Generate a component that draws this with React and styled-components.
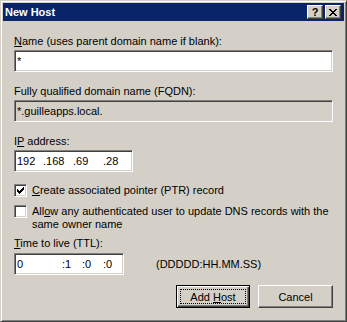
import React from 'react';
import styled, { createGlobalStyle } from 'styled-components';

const GlobalStyle = createGlobalStyle`
  html, body {
    margin: 0;
    padding: 0;
    background: #d4d0c8;
  }
  body {
    font-family: "Liberation Sans", Arial, sans-serif;
    font-size: 11px;
    color: #000;
  }
`;

const Window = styled.div`
  box-sizing: border-box;
  width: 347px;
  height: 322px;
  display: flex;
  flex-direction: column;
  padding: 2px;
  background: #d4d0c8;
  border: 1px solid;
  border-color: #d4d0c8 #404040 #404040 #d4d0c8;
  box-shadow: inset 1px 1px #fff, inset -1px -1px #808080;
`;

const TitleBar = styled.div`
  height: 18px;
  display: flex;
  align-items: center;
  padding: 0 3px 0 2px;
  background: #0a246a;
  color: #fff;
  font-weight: bold;
  font-size: 11px;
`;

const Title = styled.span`
  flex: 1;
`;

const CaptionButtons = styled.div`
  display: flex;
  gap: 2px;
`;

const CaptionButton = styled.div`
  box-sizing: border-box;
  width: 16px;
  height: 14px;
  display: flex;
  align-items: center;
  justify-content: center;
  background: #d4d0c8;
  color: #000;
  font-weight: bold;
  font-size: 11px;
  border: 1px solid;
  border-color: #fff #404040 #404040 #fff;
  box-shadow: inset -1px -1px #808080;
`;

const Body = styled.div`
  display: flex;
  flex-direction: column;
  padding: 14px 11px 0 11px;
`;

const Label = styled.div`
  line-height: 13px;
  height: 13px;
  margin-top: ${p => p.mt || 0}px;
  margin-bottom: ${p => (p.mb === undefined ? 2 : p.mb)}px;
  white-space: nowrap;
`;

const Key = styled.span`
  text-decoration: underline;
  text-underline-offset: 1px;
`;

const Field = styled.div`
  box-sizing: border-box;
  height: 22px;
  width: ${p => (p.w ? `${p.w}px` : '100%')};
  display: flex;
  align-items: center;
  padding: 0 2px;
  background: ${p => (p.readOnly ? '#d4d0c8' : '#fff')};
  border: 1px solid;
  border-color: #808080 #fff #fff #808080;
  box-shadow: inset 1px 1px #404040, inset -1px -1px #d4d0c8;
  white-space: nowrap;
`;

const Segment = styled.span`
  display: inline-block;
  width: ${p => p.w}px;
`;

const CheckRow = styled.div`
  display: flex;
  align-items: flex-start;
  gap: 5px;
  margin-top: ${p => p.mt || 0}px;
`;

const CheckBox = styled.div`
  box-sizing: border-box;
  flex: none;
  width: 13px;
  height: 13px;
  background: #fff;
  border: 1px solid;
  border-color: #808080 #fff #fff #808080;
  box-shadow: inset 1px 1px #404040, inset -1px -1px #d4d0c8;
  svg {
    display: block;
  }
`;

const CheckText = styled.div`
  line-height: 13px;
`;

const TtlRow = styled.div`
  display: flex;
  align-items: center;
  gap: 32px;
`;

const ButtonRow = styled.div`
  display: flex;
  justify-content: flex-end;
  gap: 8px;
  margin-top: 10px;
`;

const Button = styled.div`
  position: relative;
  box-sizing: border-box;
  width: ${p => p.w}px;
  height: 23px;
  display: flex;
  align-items: center;
  justify-content: center;
  background: #d4d0c8;
  border: 1px solid;
  border-color: ${p => (p.primary ? '#000' : '#fff #404040 #404040 #fff')};
  box-shadow: ${p =>
    p.primary
      ? 'inset 1px 1px #fff, inset -1px -1px #404040, inset -2px -2px #808080'
      : 'inset -1px -1px #808080'};

  ${p =>
    p.primary &&
    `
    &::after {
      content: '';
      position: absolute;
      inset: 3px;
      border: 1px dotted #000;
    }
  `}
`;

const Check = () => (
  <svg width="11" height="11" viewBox="0 0 11 11" shapeRendering="crispEdges">
    <path
      d="M2 4h1v3h-1z M3 5h1v3h-1z M4 6h1v3h-1z M5 5h1v3h-1z M6 4h1v3h-1z M7 3h1v3h-1z M8 2h1v3h-1z"
      fill="#000"
    />
  </svg>
);

const CloseGlyph = () => (
  <svg width="8" height="7" viewBox="0 0 8 7" shapeRendering="crispEdges">
    <path
      d="M0 0h2v1h-2z M1 1h2v1h-2z M2 2h4v1h-4z M3 3h2v1h-2z M2 4h4v1h-4z M1 5h2v1h-2z M0 6h2v1h-2z M6 0h2v1h-2z M5 1h2v1h-2z M5 5h2v1h-2z M6 6h2v1h-2z"
      fill="#000"
    />
  </svg>
);

export default function App() {
  return (
    <>
      <GlobalStyle />
      <Window>
        <TitleBar>
          <Title>New Host</Title>
          <CaptionButtons>
            <CaptionButton>?</CaptionButton>
            <CaptionButton>
              <CloseGlyph />
            </CaptionButton>
          </CaptionButtons>
        </TitleBar>
        <Body>
          <Label>
            <Key>N</Key>ame (uses parent domain name if blank):
          </Label>
          <Field>*</Field>

          <Label mt={13}>Fully qualified domain name (FQDN):</Label>
          <Field readOnly>*.guilleapps.local.</Field>

          <Label mt={13}>
            I<Key>P</Key> address:
          </Label>
          <Field w={119}>
            <Segment w={26}>192</Segment>
            <Segment w={30}>.168</Segment>
            <Segment w={30}>.69</Segment>
            <Segment w={20}>.28</Segment>
          </Field>

          <CheckRow mt={12}>
            <CheckBox>
              <Check />
            </CheckBox>
            <CheckText>
              <Key>C</Key>reate associated pointer (PTR) record
            </CheckText>
          </CheckRow>
          <CheckRow mt={8}>
            <CheckBox />
            <CheckText>
              All<Key>o</Key>w any authenticated user to update DNS records with the
              <br />
              same owner name
            </CheckText>
          </CheckRow>

          <Label mt={6} mb={3}>
            <Key>T</Key>ime to live (TTL):
          </Label>
          <TtlRow>
            <Field w={110}>
              <Segment w={45}>0</Segment>
              <Segment w={20}>:1</Segment>
              <Segment w={21}>:0</Segment>
              <Segment w={15}>:0</Segment>
            </Field>
            <span>(DDDDD:HH.MM.SS)</span>
          </TtlRow>

          <ButtonRow>
            <Button primary w={74}>
              <span>
                Add <Key>H</Key>ost
              </span>
            </Button>
            <Button w={75}>Cancel</Button>
          </ButtonRow>
        </Body>
      </Window>
    </>
  );
}
